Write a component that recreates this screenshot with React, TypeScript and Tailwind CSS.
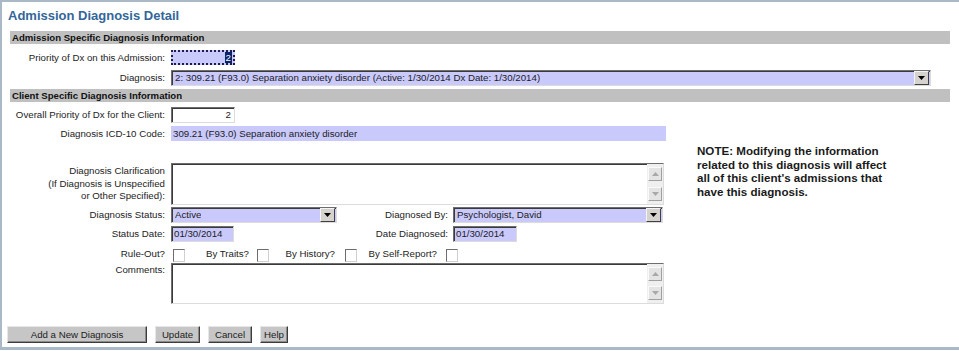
import type { ReactNode } from 'react'

const LAV = 'bg-[#c9c9fc]'
const INSET =
  'border border-t-[#6e6e6e] border-l-[#6e6e6e] border-r-[#dcdcdc] border-b-[#dcdcdc] shadow-[inset_1px_1px_0_#3a3a3a]'

function Label({ children, className = '' }: { children: ReactNode; className?: string }) {
  return <div className={`w-[164px] shrink-0 pr-[6px] text-right ${className}`}>{children}</div>
}

function DropButton() {
  return (
    <div className="ml-auto flex h-[14px] w-[15px] shrink-0 items-center justify-center border border-t-[#f4f4f4] border-l-[#f4f4f4] border-r-[#404040] border-b-[#404040] bg-[#d6d3ce]">
      <svg width="7" height="4" viewBox="0 0 7 4">
        <path d="M0 0h7L3.5 4z" fill="#000" />
      </svg>
    </div>
  )
}

function Select({ value, width }: { value: string; width: string }) {
  return (
    <div className={`flex h-[16px] items-center pl-[3px] pr-[1px] ${LAV} ${INSET} ${width}`}>
      <span className="truncate leading-[14px]">{value}</span>
      <DropButton />
    </div>
  )
}

function ScrollArrow({ up }: { up?: boolean }) {
  return (
    <div className="flex h-[14px] w-[14px] items-center justify-center border border-t-[#fafafa] border-l-[#fafafa] border-r-[#a0a0a0] border-b-[#a0a0a0] bg-[#e4e4e4]">
      <svg width="7" height="4" viewBox="0 0 7 4">
        <path d={up ? 'M0 4h7L3.5 0z' : 'M0 0h7L3.5 4z'} fill="#a8a8a8" />
      </svg>
    </div>
  )
}

function TextArea({ height }: { height: string }) {
  return (
    <div className={`flex w-[493px] bg-white ${INSET} ${height}`}>
      <div className="flex-1" />
      <div className="flex w-[16px] flex-col justify-between bg-[#efefef] py-[3px] pl-[1px]">
        <ScrollArrow up />
        <ScrollArrow />
      </div>
    </div>
  )
}

function Check() {
  return <span className="block h-[13px] w-[12px] shrink-0 border border-t-[#6e6e6e] border-l-[#6e6e6e] border-r-[#d0d0d0] border-b-[#d0d0d0] bg-white" />
}

function Btn({ children, width }: { children: ReactNode; width: string }) {
  return (
    <div className={`flex h-[17px] items-center justify-center border border-t-[#e6e6e6] border-l-[#e6e6e6] border-r-[#3c3c3c] border-b-[#3c3c3c] bg-[#c6c6c6] shadow-[inset_-1px_-1px_0_#8a8a8a] ${width}`}>
      {children}
    </div>
  )
}

function SectionBar({ children }: { children: ReactNode }) {
  return (
    <div className="ml-[3px] h-[13px] bg-[#c0c0c0] pl-[2px] text-[9.6px] font-bold leading-[13px] text-[#111]">
      {children}
    </div>
  )
}

export default function App() {
  return (
    <div className="h-[351px] w-[959px] bg-white font-['Liberation_Sans',Arial,sans-serif] text-[9.7px] leading-[12px] text-[#1c1c1c]">
      <div className="h-[350px] border-t-2 border-b-[3px] border-l-2 border-[#a9b9c8] pl-[5px] pr-[9px]">
        <h1 className="h-[29px] pl-[1px] pt-[6px] text-[13px] font-bold leading-[16px] text-[#336699]">
          Admission Diagnosis Detail
        </h1>

        {/* Admission specific */}
        <SectionBar>Admission Specific Diagnosis Information</SectionBar>
        <div className="mt-[6px] flex h-[15px] items-center">
          <Label>Priority of Dx on this Admission:</Label>
          <div className={`flex h-[15px] w-[64px] items-center justify-end border-2 border-dotted border-[#1c1c50] pr-[1px] ${LAV}`}>
            <span className="bg-[#0a246a] px-[1px] leading-[11px] text-white">2</span>
          </div>
        </div>
        <div className="mt-[5px] flex h-[16px] items-center">
          <Label>Diagnosis:</Label>
          <Select
            value="2: 309.21 (F93.0) Separation anxiety disorder (Active: 1/30/2014 Dx Date: 1/30/2014)"
            width="w-[760px]"
          />
        </div>

        {/* Client specific */}
        <div className="mt-[3px]">
          <SectionBar>Client Specific Diagnosis Information</SectionBar>
        </div>
        <div className="flex">
          <div className="w-[664px] shrink-0">
            <div className="mt-[5px] flex h-[16px] items-center">
              <Label>Overall Priority of Dx for the Client:</Label>
              <div className={`flex h-[16px] w-[64px] items-center justify-end bg-white pr-[3px] ${INSET}`}>2</div>
            </div>
            <div className="mt-[3px] flex h-[15px] items-center">
              <Label>Diagnosis ICD-10 Code:</Label>
              <div className={`flex h-[15px] w-[495px] items-center pl-[2px] ${LAV}`}>
                309.21 (F93.0) Separation anxiety disorder
              </div>
            </div>
            <div className="mt-[22px] flex h-[42px] items-center">
              <Label className="leading-[12.5px]">
                Diagnosis Clarification
                <br />
                (If Diagnosis is Unspecified
                <br />
                or Other Specified):
              </Label>
              <TextArea height="h-[42px]" />
            </div>
            <div className="mt-[2px] flex h-[16px] items-center">
              <Label>Diagnosis Status:</Label>
              <Select value="Active" width="w-[166px]" />
              <div className="w-[116px] shrink-0 pr-[5px] text-right">Diagnosed By:</div>
              <Select value="Psychologist, David" width="w-[210px]" />
            </div>
            <div className="mt-[3px] flex h-[16px] items-center">
              <Label>Status Date:</Label>
              <div className={`flex h-[16px] w-[63px] items-center pl-[2px] ${LAV} ${INSET}`}>01/30/2014</div>
              <div className="w-[219px] shrink-0 pr-[5px] text-right">Date Diagnosed:</div>
              <div className={`flex h-[16px] w-[64px] items-center pl-[2px] ${LAV} ${INSET}`}>01/30/2014</div>
            </div>
            <div className="mt-[5px] flex h-[14px] items-center">
              <Label>Rule-Out?</Label>
              <div className="ml-[2px] pt-[3px]">
                <Check />
              </div>
              <div className="w-[72px] shrink-0 pr-[8px] text-right">By Traits?</div>
              <div className="pt-[3px]">
                <Check />
              </div>
              <div className="w-[76px] shrink-0 pr-[10px] text-right">By History?</div>
              <div className="pt-[3px]">
                <Check />
              </div>
              <div className="w-[89px] shrink-0 pr-[9px] text-right">By Self-Report?</div>
              <div className="pt-[3px]">
                <Check />
              </div>
            </div>
            <div className="mt-[2px] flex h-[41px] items-start">
              <Label className="pt-[1px]">Comments:</Label>
              <TextArea height="h-[41px]" />
            </div>
          </div>

          <p className="ml-[26px] mt-[42px] text-[11.6px] font-bold leading-[13.5px] text-[#1a1a1a]">
            NOTE: Modifying the information
            <br />
            related to this diagnosis will affect
            <br />
            all of this client's admissions that
            <br />
            have this diagnosis.
          </p>
        </div>

        {/* Actions */}
        <div className="mt-[22px] flex gap-[8px]">
          <Btn width="w-[140px]">Add a New Diagnosis</Btn>
          <Btn width="w-[45px]">Update</Btn>
          <Btn width="w-[44px]">Cancel</Btn>
          <Btn width="w-[28px]">Help</Btn>
        </div>
      </div>
    </div>
  )
}
